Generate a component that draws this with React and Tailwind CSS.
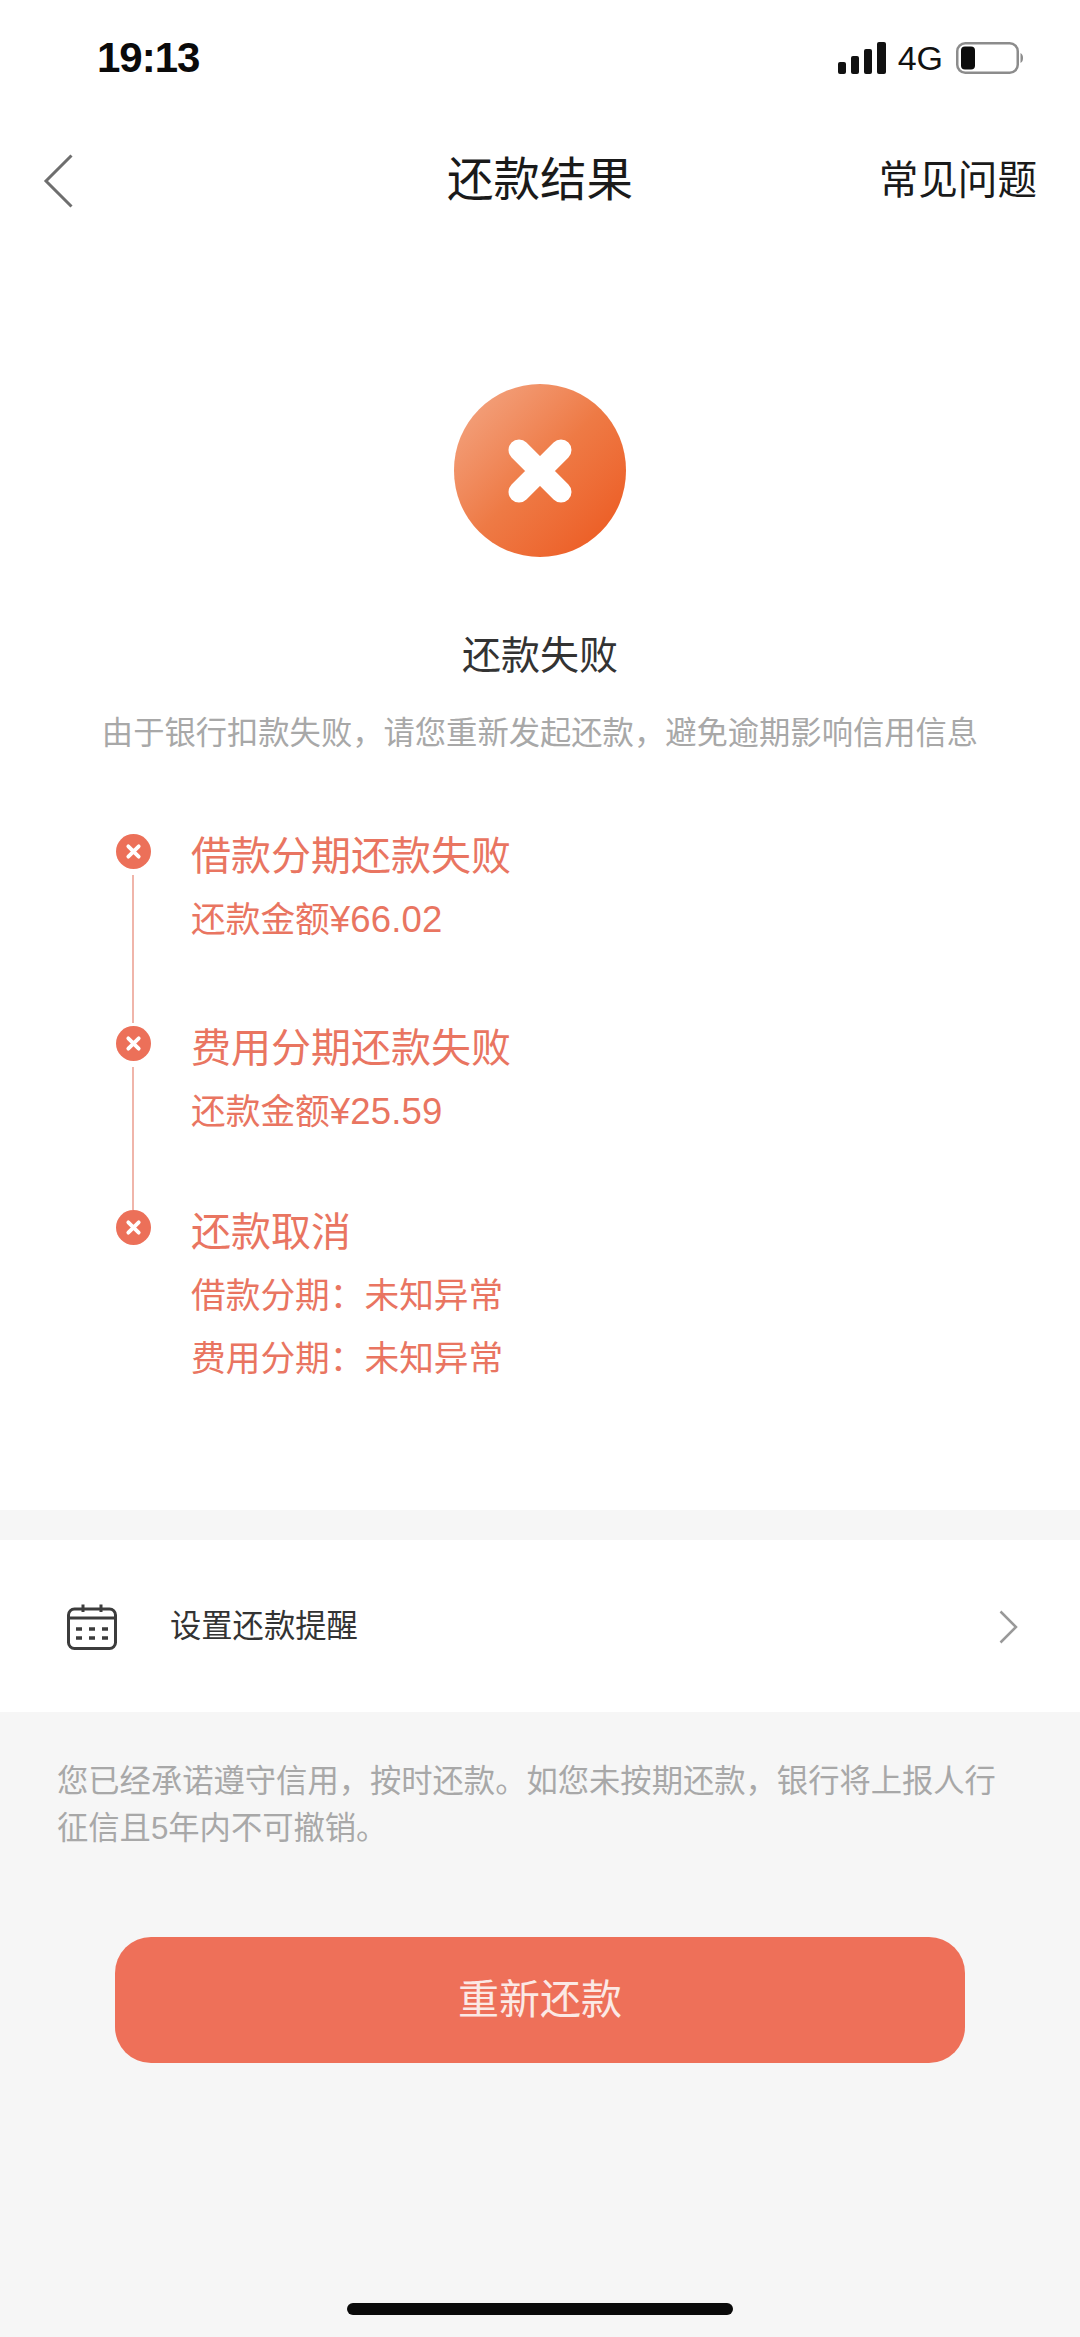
import React from "react";

const CJK = "font-['Liberation_Sans','Noto_Sans_CJK_SC',sans-serif]";

function Dot() {
  return (
    <svg viewBox="0 0 35 35" className="w-[35px] h-[35px] shrink-0">
      <circle cx="17.5" cy="17.5" r="17.5" fill="#ec7059" />
      <path d="M12.3 12.3L22.7 22.7M22.7 12.3L12.3 22.7" stroke="#fff" strokeWidth="3.8" strokeLinecap="round" />
    </svg>
  );
}

function Step({ title, lines, last, height, lineBottom }) {
  return (
    <div className={`flex ${height}`}>
      <div className="w-[35px] flex flex-col items-center shrink-0">
        <Dot />
        {!last && <div className={`w-[2px] flex-1 mt-[6px] mr-[2px] ${lineBottom} bg-[#f0b5aa]`} />}
      </div>
      <div className="ml-[40px] text-[#e97561]">
        <div className="text-[40px] leading-[46px] mt-[-1px]">{title}</div>
        {lines.map((l, i) => (
          <div key={i} className="text-[34.7px] leading-[44px] mt-[19px]">{l}</div>
        ))}
      </div>
    </div>
  );
}

function Amount({ value }) {
  return (
    <>
      还款金额<span className="text-[36.5px] tracking-[0.2px]">¥{value}</span>
    </>
  );
}

export default function App() {
  return (
    <div className={`w-[1080px] h-[2337px] bg-[#f6f6f6] flex flex-col overflow-hidden ${CJK}`}>
      <div className="bg-white h-[1510px] flex flex-col">
        {/* status bar */}
        <div className="h-[116px] flex items-start justify-between pl-[97px] pr-[56px] pt-[34px]">
          <div className="text-[42px] leading-[48px] font-bold tracking-[-1px] text-[#0a0a0a]">19:13</div>
          <div className="flex items-center pt-[8px]">
            <svg viewBox="0 0 48 32" className="w-[48px] h-[32px]">
              <rect x="0" y="20" width="8" height="12" rx="2" fill="#111" />
              <rect x="13" y="14" width="8" height="18" rx="2" fill="#111" />
              <rect x="26" y="7" width="8" height="25" rx="2" fill="#111" />
              <rect x="39" y="0" width="9" height="32" rx="2" fill="#111" />
            </svg>
            <div className="ml-[12px] text-[34px] leading-[32px] text-[#111]">4G</div>
            <svg viewBox="0 0 68 32" className="ml-[13px] w-[68px] h-[32px]">
              <rect x="1.25" y="1.25" width="60.5" height="29.5" rx="8" fill="none" stroke="#8c8c8c" strokeWidth="2.5" />
              <rect x="5" y="4.5" width="14" height="23" rx="4" fill="#0c0c0c" />
              <path d="M64.5 11C66.5 12 67 14 67 16C67 18 66.5 20 64.5 21Z" fill="#8c8c8c" />
            </svg>
          </div>
        </div>
        {/* nav */}
        <div className="h-[128px] relative flex items-center justify-center">
          <svg viewBox="0 0 30 54" className="absolute left-[43px] top-[38px] w-[30px] h-[54px]">
            <path d="M28.5 1.5L3 27L28.5 52.5" fill="none" stroke="#6e6e6e" strokeWidth="3" />
          </svg>
          <div className="text-[46.5px] leading-[54px] text-[#1a1a1a]">还款结果</div>
          <div className="absolute right-[43px] top-[40px] text-[39.6px] leading-[48px] text-[#1a1a1a]">常见问题</div>
        </div>
        {/* hero */}
        <div className="flex flex-col items-center">
          <div className="mt-[140px] w-[172px] h-[173px] rounded-full bg-gradient-to-br from-[#f3a987] via-[#ee7a45] to-[#ec5518] flex items-center justify-center">
            <svg viewBox="0 0 66 66" className="w-[66px] h-[66px]">
              <path d="M12 12L54 54M54 12L12 54" stroke="#fff" strokeWidth="21" strokeLinecap="round" />
            </svg>
          </div>
          <div className="mt-[75px] text-[39px] leading-[48px] text-[#333333]">还款失败</div>
          <div className="mt-[30px] text-[31.3px] leading-[48px] text-[#a8a8a8] whitespace-nowrap">由于银行扣款失败，请您重新发起还款，避免逾期影响信用信息</div>
        </div>
        {/* timeline */}
        <div className="mt-[76px] ml-[116px] flex flex-col">
          <Step height="h-[192px]" lineBottom="mb-[3px]" title="借款分期还款失败" lines={[<Amount key="a" value="66.02" />]} />
          <Step height="h-[184px]" lineBottom="mb-[0px]" title="费用分期还款失败" lines={[<Amount key="b" value="25.59" />]} />
          <Step last height="" title="还款取消" lines={["借款分期：未知异常", "费用分期：未知异常"]} />
        </div>
      </div>
      {/* reminder */}
      <div className="mt-[30px] h-[172px] bg-white flex items-center pt-[2px] pl-[67px] pr-[62px]">
        <svg viewBox="0 0 50 46" className="w-[50px] h-[46px] shrink-0">
          <rect x="1.5" y="5" width="47" height="39.5" rx="6" fill="none" stroke="#3c3c3c" strokeWidth="3" />
          <path d="M2 14H48M16 0.5V8M34 0.5V8" fill="none" stroke="#3c3c3c" strokeWidth="3" />
          <path d="M9 25H15M22 25H28M35 25H41M9 34H15M22 34H28M35 34H41" fill="none" stroke="#3c3c3c" strokeWidth="3.4" />
        </svg>
        <div className="ml-[53px] text-[31.3px] leading-[40px] text-[#333333]">设置还款提醒</div>
        <svg viewBox="0 0 19 34" className="ml-auto w-[19px] h-[34px]">
          <path d="M1.5 1.5L17 17L1.5 32.5" fill="none" stroke="#999999" strokeWidth="2.5" />
        </svg>
      </div>
      {/* note */}
      <div className="mt-[46px] px-[57px] text-[31.3px] leading-[47px] text-[#a8a8a8]">
        <div className="whitespace-nowrap">您已经承诺遵守信用，按时还款。如您未按期还款，银行将上报人行</div>
        <div>征信且5年内不可撤销。</div>
      </div>
      {/* button */}
      <div className="mt-[85px] mx-[115px] h-[126px] pt-[2px] rounded-[36px] bg-[#ee7059] flex items-center justify-center text-[41px] text-[#fbe9e5]">重新还款</div>
      {/* home indicator */}
      <div className="mt-[240px] mx-auto w-[386px] h-[12px] rounded-full bg-[#0a0a0a]" />
    </div>
  );
}
